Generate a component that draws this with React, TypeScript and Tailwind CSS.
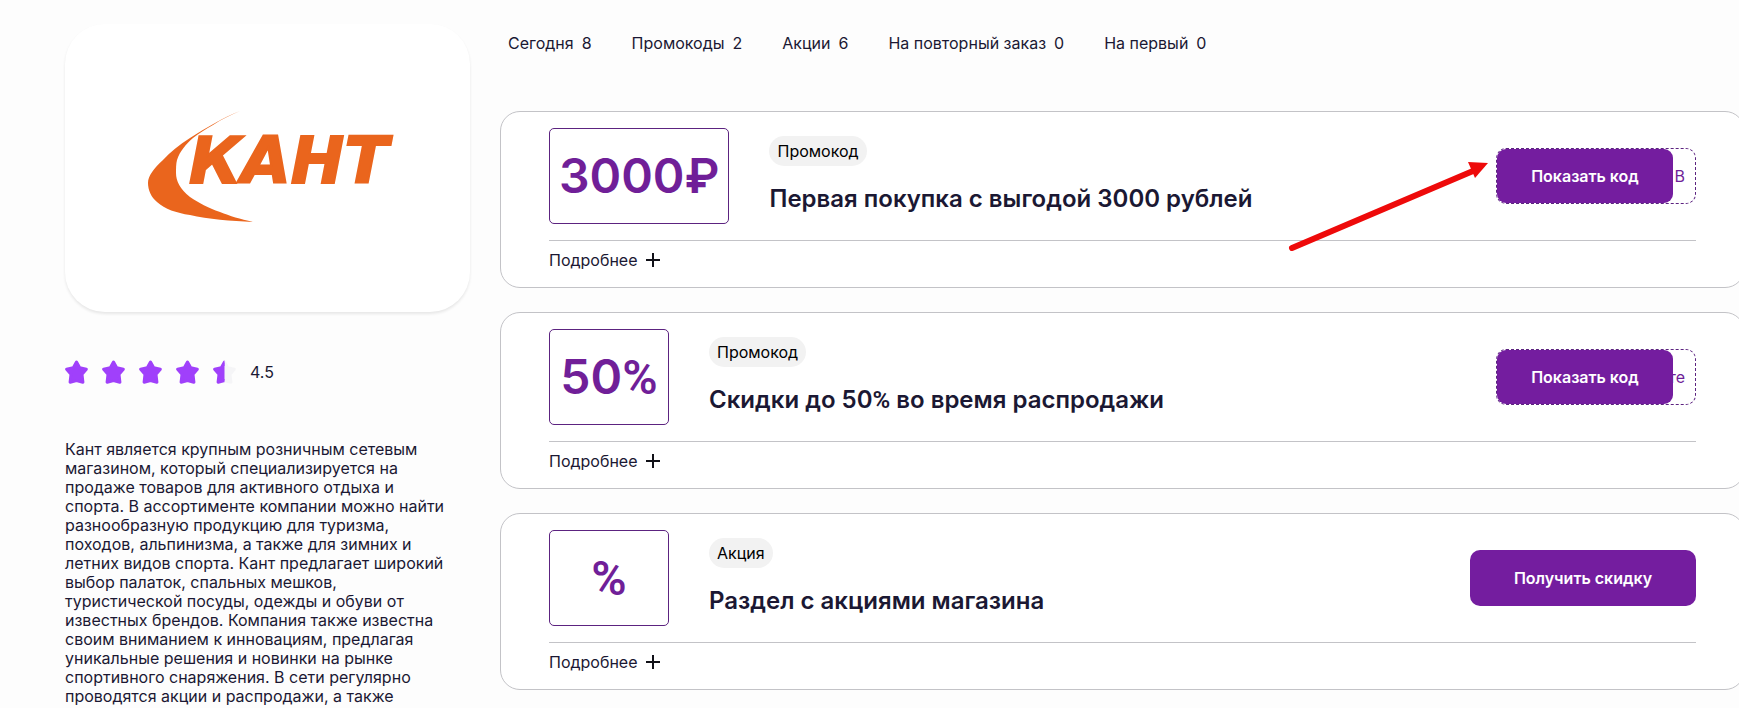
const FILTERS = [
  { label: "Сегодня", count: 8 },
  { label: "Промокоды", count: 2 },
  { label: "Акции", count: 6 },
  { label: "На повторный заказ", count: 0 },
  { label: "На первый", count: 0 },
];

type Offer = {
  value: string;
  kind: string;
  title: string;
  code?: string;
  pointer?: boolean;
};

const OFFERS: Offer[] = [
  {
    value: "3000₽",
    kind: "Промокод",
    title: "Первая покупка с выгодой 3000 рублей",
    code: "В",
    pointer: true,
  },
  {
    value: "50%",
    kind: "Промокод",
    title: "Скидки до 50% во время распродажи",
    code: "те",
  },
  { value: "%", kind: "Акция", title: "Раздел с акциями магазина" },
];

const STAR =
  "M11.5 2L14.7 7.8L21.3 9.2L17 14.4L17.9 22.2L11.5 20.5L5.1 22.2L6 14.4L1.7 9.2L8.3 7.8Z";

const Logo = () => (
  <svg viewBox="-14 0 271 120" className="w-[271px]" role="img" aria-label="Кант">
    <path
      fill="#ea651d"
      d="M94 3C76 10 60 20 44 30C33 37 24 44 17 52C8 60 2 68 2 75C2 82 5 89 11 94C19 101 30 105 44 107C62 111 85 113 107 114C94 111 84 108 74 104C62 100 53 95 44 89C34 81 30 73 30 65C30 60 30 56 31 52C34 43 40 36 47 30C53 25 60 21 67 17C76 11 85 7 94 3Z"
    />
    <text
      x="43"
      y="75"
      fill="#ea651d"
      stroke="#ea651d"
      strokeWidth="2"
      className="font-['DejaVu_Sans',sans-serif] text-[64px] font-bold italic"
    >
      КАНТ
    </text>
  </svg>
);

const Rating = () => (
  <div className="mt-7 flex h-16 items-center">
    <div className="flex gap-[14px]" role="img" aria-label="Рейтинг 4.5">
      {[1, 1, 1, 1, 0.5].map((fill, i) => (
        <svg key={i} viewBox="0 0 23 24" className="h-6 w-[23px]" strokeWidth="3" strokeLinejoin="round">
          <defs>
            <clipPath id={`star-${i}`}>
              <rect width={23 * fill} height="24" />
            </clipPath>
          </defs>
          <path d={STAR} fill="#f5f5f7" stroke="#f5f5f7" />
          <path d={STAR} fill="#a040fb" stroke="#a040fb" clipPath={`url(#star-${i})`} />
        </svg>
      ))}
    </div>
    <span className="ml-[14px] text-base">4.5</span>
  </div>
);

const Arrow = () => (
  <svg
    viewBox="0 0 202 92"
    className="pointer-events-none absolute top-12 right-[254px] h-[92px] w-[202px]"
    aria-hidden="true"
  >
    <path d="M4 88L185 11" stroke="#ee0a0a" strokeWidth="6" strokeLinecap="round" />
    <path d="M180 2L200 3L187 18Z" fill="#ee0a0a" />
  </svg>
);

// Percent signs are set in Roboto, the rest of the text in Inter
const Percent = ({ text }: { text: string }) => (
  <span>
    {text.split(/(%)/).map((part, i) =>
      part === "%" ? (
        <span key={i} className="font-['Roboto',sans-serif]">
          %
        </span>
      ) : (
        part
      )
    )}
  </span>
);

const OfferCard = ({ value, kind, title, code, pointer }: Offer) => (
  <article className="relative rounded-[20px] border border-[#c3c3c7] bg-white px-12 pt-4">
    <div className="flex items-center">
      <div className="flex h-24 min-w-[120px] items-center justify-center rounded-[5px] border border-[#5c2380] px-[9px] text-5xl font-semibold text-[#701f98]">
        <Percent text={value} />
      </div>
      <div className="mt-2 ml-10 flex flex-col items-start gap-[18px] self-start">
        <span className="rounded-full bg-[#f2f2f2] px-2 text-base leading-[30px] text-black">
          {kind}
        </span>
        <h2 className="text-2xl leading-[29px] font-semibold">
          <Percent text={title} />
        </h2>
      </div>
      {code ? (
        <div className="relative ml-auto flex h-14 w-[200px] items-center justify-end rounded-[10px] border border-dashed border-[#5c2380] pr-[10px] text-[#701f98]">
          {code}
          <button
            type="button"
            className="absolute inset-y-0 right-[22px] left-0 rounded-[9px] bg-[#741d9f] font-semibold text-white"
          >
            Показать код
          </button>
        </div>
      ) : (
        <button
          type="button"
          className="ml-auto h-14 w-[226px] rounded-[10px] bg-[#741d9f] font-semibold text-white"
        >
          Получить скидку
        </button>
      )}
    </div>
    <div className="mt-4 border-t border-[#c3c3c7]">
      <button type="button" className="flex h-[46px] items-center gap-2 pb-2 text-base">
        Подробнее
        <svg viewBox="0 0 14 14" className="h-[14px] w-[14px]" aria-hidden="true">
          <path d="M7 0V14M0 7H14" stroke="#111118" strokeWidth="2" />
        </svg>
      </button>
    </div>
    {pointer && <Arrow />}
  </article>
);

export default function App() {
  return (
    <div className="flex h-screen items-start gap-[30px] overflow-hidden bg-[#fdfdfd] pl-[65px] font-['Inter',sans-serif] text-base text-[#1b1833]">
      <aside className="w-[405px] shrink-0 pt-6">
        <div className="flex h-72 items-center justify-center rounded-[40px] bg-white shadow-[0_2px_3px_rgba(0,0,0,0.09)]">
          <Logo />
        </div>
        <Rating />
        <p className="mt-9 pr-4 leading-[19px]">
          Кант является крупным розничным сетевым магазином, который специализируется на
          продаже товаров для активного отдыха и спорта. В ассортименте компании можно найти
          разнообразную продукцию для туризма, походов, альпинизма, а также для зимних и
          летних видов спорта. Кант предлагает широкий выбор палаток, спальных мешков,
          туристической посуды, одежды и обуви от известных брендов. Компания также известна
          своим вниманием к инновациям, предлагая уникальные решения и новинки на рынке
          спортивного снаряжения. В сети регулярно проводятся акции и распродажи, а также
        </p>
      </aside>

      {/* The list runs slightly past the right edge of the window */}
      <main className="-mr-1.5 min-w-0 flex-1 pt-[31px]">
        <nav className="flex gap-10 pl-2">
          {FILTERS.map(({ label, count }) => (
            <a key={label} href="#" className="flex gap-2">
              <span>{label}</span>
              <span>{count}</span>
            </a>
          ))}
        </nav>
        <div className="mt-14 flex flex-col gap-6">
          {OFFERS.map((offer) => (
            <OfferCard key={offer.title} {...offer} />
          ))}
        </div>
      </main>
    </div>
  );
}
